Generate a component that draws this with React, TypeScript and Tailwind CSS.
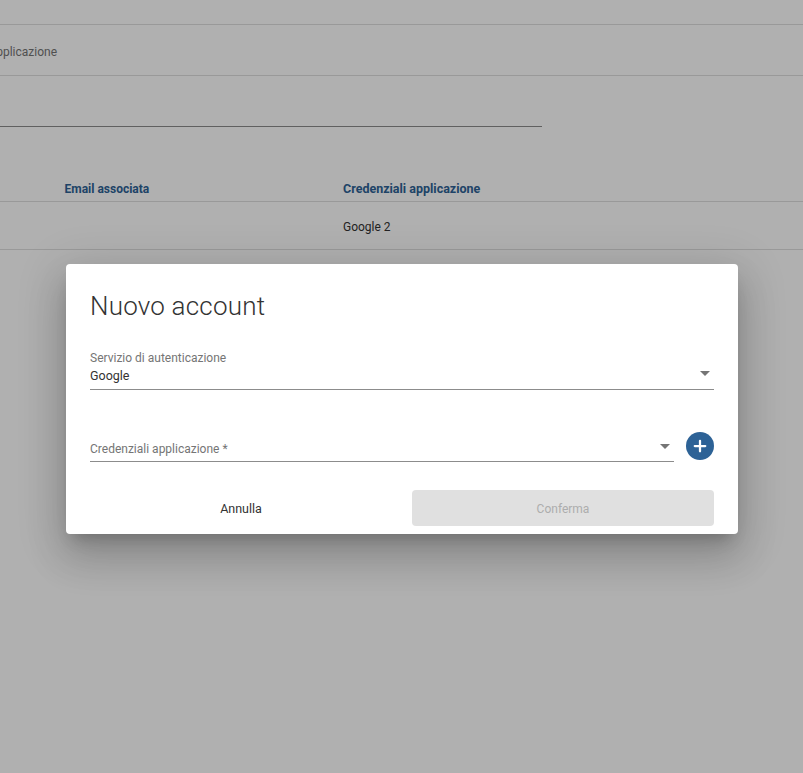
import { Plus } from 'lucide-react';

const font = { fontFamily: 'Roboto, sans-serif' };

function Caret() {
  return (
    <svg width="10" height="5" viewBox="0 0 10 5" className="shrink-0">
      <path d="M0 0h10L5 5z" fill="#757575" />
    </svg>
  );
}

function Background() {
  return (
    <div className="h-[773px] bg-white text-[12px] text-[#333]">
      <div className="h-[25px] border-b border-[#dedede]" />
      <div className="flex h-[51px] items-center border-b border-[#dedede] pt-[3px]">
        <div className="flex w-[57px] justify-end whitespace-nowrap text-[#757575]">
          Credenziali applicazione
        </div>
      </div>
      <div className="h-[51px] w-[542px] border-b border-[#8c8c8c]" />
      <div className="flex h-[75px] items-end border-b border-[#dedede] pb-[4px] font-bold leading-4 text-[#2d6296]">
        <div className="w-[343px] pl-[64.5px] text-[12px]">Email associata</div>
        <div className="text-[12.5px]">Credenziali applicazione</div>
      </div>
      <div className="flex h-[48px] items-center border-b border-[#dedede] pl-[343px] pt-[2px]">Google 2</div>
    </div>
  );
}

export default function App() {
  return (
    <div className="relative h-[773px] w-[803px] overflow-hidden" style={font}>
      <Background />
      <div className="absolute inset-0 bg-black/[.31]">
        <div className="ml-[66px] mt-[264px] h-[270px] w-[672px] rounded bg-white px-6 pt-6 shadow-[0_11px_15px_-7px_rgba(0,0,0,.2),0_24px_38px_3px_rgba(0,0,0,.14),0_9px_46px_8px_rgba(0,0,0,.12)]">
          <h2 className="text-[26px] leading-9 font-light tracking-[.2px] text-[#333]">Nuovo account</h2>

          <div className="mt-[30px] flex h-[36px] items-end justify-between border-b border-[#8c8c8c] pb-[5px]">
            <div>
              <div className="text-[12px] leading-[14px] text-[#757575]">Servizio di autenticazione</div>
              <div className="mt-[3px] text-[12.5px] leading-[16px] text-[#333]">Google</div>
            </div>
            <div className="mb-[8px] mr-[4px]"><Caret /></div>
          </div>

          <div className="mt-[41px] flex items-center gap-3">
            <div className="flex h-[31px] flex-1 items-center justify-between border-b border-[#8c8c8c] pt-[4px]">
              <span className="mt-[2px] text-[12px] text-[#757575]">Credenziali applicazione *</span>
              <div className="mb-[4px] mr-[4px]"><Caret /></div>
            </div>
            <div className="mb-[2px] flex h-7 w-7 items-center justify-center rounded-full bg-[#2d6296]">
              <Plus size={18} strokeWidth={3} color="#fff" />
            </div>
          </div>

          <div className="mt-[28px] flex gap-5">
            <button className="h-9 flex-1 pt-[2px] text-[12.5px] text-[#333]">Annulla</button>
            <button className="h-9 flex-1 rounded bg-[#e0e0e0] pt-[2px] text-[12px] text-[#adadad]">Conferma</button>
          </div>
        </div>
      </div>
    </div>
  );
}
